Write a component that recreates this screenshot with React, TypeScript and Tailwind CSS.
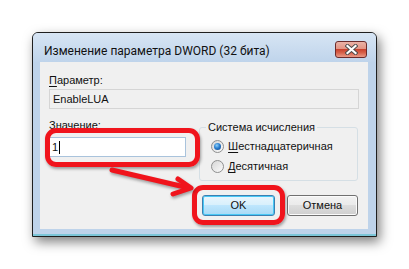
import React from "react";

const Radio = ({ checked }: { checked?: boolean }) => (
  <span className="flex h-[13px] w-[13px] items-center justify-center rounded-full border border-[#8e8f8f] bg-gradient-to-br from-[#d6d6d6] to-[#fbfbfb]">
    {checked && (
      <span className="h-[7px] w-[7px] rounded-full bg-[radial-gradient(circle_at_40%_35%,#8fd0f8_0%,#2a7fd0_45%,#0d3d80_100%)]" />
    )}
  </span>
);

export default function App() {
  return (
    <div className="relative h-[269px] w-[409px] overflow-hidden bg-white pl-[32px] pt-[32px] font-['Microsoft_Sans_Serif','Liberation_Sans',sans-serif] text-[11px] text-[#111]">
      {/* window */}
      <div className="flex h-[205px] w-[345px] flex-col rounded-t-[6px] border border-[#1f1f1f] bg-[#bed3ea] pb-[7px] pl-[7px] pr-[8px] shadow-[inset_0_-2px_0_#7cc6d8,3px_5px_12px_rgba(0,0,0,0.5)]">
        <div className="-mx-[7px] -mr-[8px] flex h-[29px] items-start justify-between rounded-t-[5px] bg-gradient-to-b from-[#d7e5f4] to-[#bfd4eb]">
          <span className="ml-[11px] mt-[10px] font-['Segoe_UI',Roboto,sans-serif] text-[12px] leading-[16px]">
            Изменение параметра DWORD (32 бита)
          </span>
          <button className="mr-[9px] mt-[8px] flex h-[17px] w-[32px] items-center justify-center rounded-[3px] border border-[#6b2b2b] bg-[linear-gradient(#eab2a6_0%,#e39585_45%,#c9432f_50%,#d65f48_70%,#e99b88_100%)]">
            <svg width="13" height="11" viewBox="0 0 13 11">
              <path d="M2.5 2 L10.5 9 M10.5 2 L2.5 9" stroke="#4a4a4a" strokeWidth="4" strokeLinecap="square" />
              <path d="M2.5 2 L10.5 9 M10.5 2 L2.5 9" stroke="#ffffff" strokeWidth="2.2" strokeLinecap="square" />
            </svg>
          </button>
        </div>

        {/* client area */}
        <div className="flex flex-1 flex-col bg-[#f0f0f0] pl-[9px] pr-[10px] pt-[10px]">
          <span className="leading-[16px]">
            <u className="underline-offset-2">П</u>араметр:
          </span>
          <div className="mt-[1px] flex h-[20px] w-[310px] items-center border border-[#d5d5d5] bg-[#f0f0f0] pl-[3px]">
            EnableLUA
          </div>

          <div className="mt-[8px] flex items-start gap-[13px]">
            <div className="flex w-[138px] flex-col">
              <span className="leading-[16px]">
                <u className="underline-offset-2">З</u>начение:
              </span>
              <div className="mt-[4px] flex h-[20px] items-center border border-[#a9c3dc] bg-white pl-[2px]">
                <span>1</span>
                <span className="ml-[1px] h-[13px] w-[1px] bg-black" />
              </div>
            </div>

            <fieldset className="mt-[2px] h-[62px] w-[160px] rounded-[3px] border border-[#d5dfe5] pb-[6px] pl-[11px] pt-[3px]">
              <legend className="-ml-[5px] px-[2px] leading-[16px]">Система исчисления</legend>
              <div className="flex flex-col gap-[4px]">
                <label className="flex h-[16px] items-center gap-[4px]">
                  <Radio checked />
                  <span>
                    <u className="underline-offset-2">Ш</u>естнадцатеричная
                  </span>
                </label>
                <label className="flex h-[16px] items-center gap-[4px]">
                  <Radio />
                  <span>
                    <u className="underline-offset-2">Д</u>есятичная
                  </span>
                </label>
              </div>
            </fieldset>
          </div>

          <div className="mt-[14px] flex justify-end gap-[12px]">
            <button className="flex h-[21px] w-[73px] items-center justify-center rounded-[3px] border border-[#3c7fb1] bg-[linear-gradient(#eaf6fd_0%,#d9f0fc_45%,#bee6fd_50%,#a7d9f5_100%)] shadow-[inset_0_0_0_1px_#48c8f5]">
              OK
            </button>
            <button className="flex h-[21px] w-[71px] items-center justify-center rounded-[3px] border border-[#707070] bg-[linear-gradient(#f2f2f2_0%,#ebebeb_45%,#dddddd_50%,#cfcfcf_100%)] shadow-[inset_0_0_0_1px_#fbfbfb]">
              Отмена
            </button>
          </div>
        </div>
      </div>

      {/* red annotations */}
      <div className="absolute left-[45px] top-[128px] h-[39px] w-[155px] rounded-[11px] border-[5px] border-[#f0141c] shadow-[1px_2px_3px_rgba(0,0,0,0.35)]" />
      <div className="absolute left-[192px] top-[185px] h-[40px] w-[93px] rounded-[11px] border-[5px] border-[#f0141c] shadow-[1px_2px_3px_rgba(0,0,0,0.35)]" />
      <svg className="pointer-events-none absolute left-0 top-0" width="409" height="269">
        <g fill="none" stroke="#f0141c" strokeWidth="5" strokeLinecap="round" strokeLinejoin="round" style={{ filter: "drop-shadow(1px 2px 1.5px rgba(0,0,0,0.35))" }}>
          <path d="M112 170 L189 188" />
          <path d="M178 179 L191 188 L173 194" />
        </g>
      </svg>
    </div>
  );
}
